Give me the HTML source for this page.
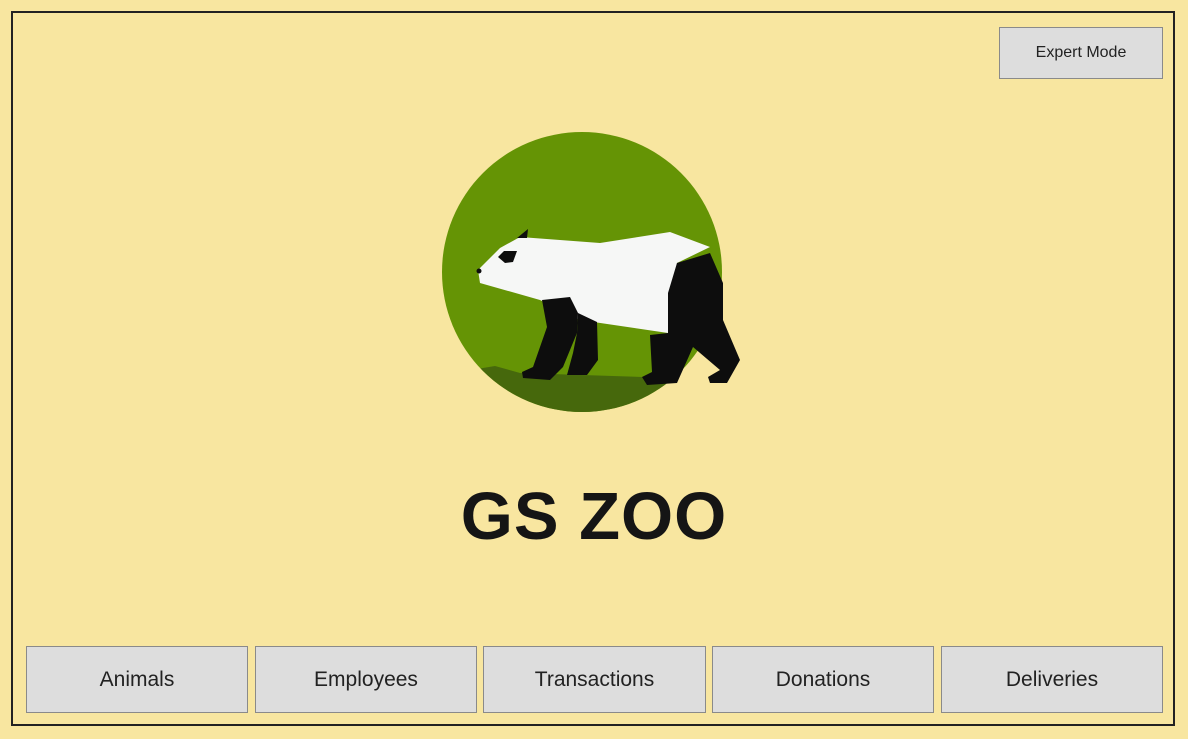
<!DOCTYPE html>
<html><head><meta charset="utf-8"><style>
html,body{margin:0;padding:0;width:1188px;height:739px;background:#f8e6a0;overflow:hidden;font-family:"Liberation Sans",sans-serif}
.frame{position:absolute;left:11px;top:11px;width:1164px;height:715px;border:2px solid #222;box-sizing:border-box}
.btn{position:absolute;background:#dddddd;border:1px solid #8a8a8a;box-sizing:border-box;display:flex;align-items:center;justify-content:center;color:#222;font-size:21px}
.title{position:absolute;left:0;width:1188px;top:478px;text-align:center;font-weight:bold;font-size:67px;color:#151515;letter-spacing:1px}
</style></head><body>
<div class="frame"></div>
<div class="btn" style="left:999px;top:27px;width:164px;height:52px;font-size:16px">Expert Mode</div>
<svg style="position:absolute;left:0;top:0" width="1188" height="739">
<defs><clipPath id="c"><circle cx="582" cy="272" r="140"/></clipPath></defs>
<circle cx="582" cy="272" r="140" fill="#659405"/>
<polygon clip-path="url(#c)" fill="#46680c" points="483,368 495,366 520,373 643,377 690,383 740,400 740,430 420,430 420,380"/>
<polygon fill="#f6f7f6" points="478,270 500,248 520,237 600,243 670,232 710,247 677,263 668,333 580,320 540,300 480,283"/>
<polygon fill="#0d0d0d" points="517,238 528,229 527,238"/>
<polygon fill="#0d0d0d" points="498,257 504,251 517,251 513,262 505,263"/>
<circle cx="479" cy="271" r="2.5" fill="#0d0d0d"/>
<polygon fill="#0d0d0d" points="677,263 710,253 723,283 723,320 740,360 727,383 710,383 708,377 720,370 693,347 677,383 647,385 642,377 652,372 650,335 668,333 668,293"/>
<polygon fill="#0d0d0d" points="542,300 570,297 578,313 577,333 563,367 550,380 523,378 522,372 533,367 547,327"/>
<polygon fill="#0d0d0d" points="578,313 597,322 598,360 587,375 567,375 573,353 577,333"/>
</svg>
<div class="title">GS ZOO</div>
<div class="btn" style="left:26px;top:646px;width:222px;height:67px">Animals</div>
<div class="btn" style="left:255px;top:646px;width:222px;height:67px">Employees</div>
<div class="btn" style="left:483px;top:646px;width:223px;height:67px">Transactions</div>
<div class="btn" style="left:712px;top:646px;width:222px;height:67px">Donations</div>
<div class="btn" style="left:941px;top:646px;width:222px;height:67px">Deliveries</div>
</body></html>
